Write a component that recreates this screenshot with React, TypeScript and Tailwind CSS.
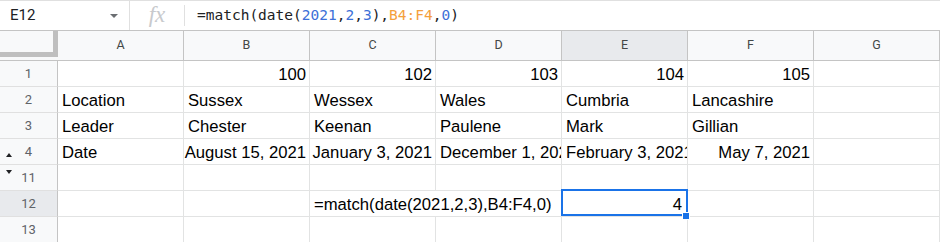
import React from 'react';

const COLS = ['A', 'B', 'C', 'D', 'E', 'F', 'G'];

type Cell = { text?: string; align?: 'left' | 'right'; span?: number; selected?: boolean };

const rows: { label: string; cells: Cell[]; active?: boolean; mark?: 'up' | 'down' }[] = [
  {
    label: '1',
    cells: [{}, { text: '100', align: 'right' }, { text: '102', align: 'right' }, { text: '103', align: 'right' }, { text: '104', align: 'right' }, { text: '105', align: 'right' }, {}],
  },
  {
    label: '2',
    cells: [{ text: 'Location' }, { text: 'Sussex' }, { text: 'Wessex' }, { text: 'Wales' }, { text: 'Cumbria' }, { text: 'Lancashire' }, {}],
  },
  {
    label: '3',
    cells: [{ text: 'Leader' }, { text: 'Chester' }, { text: 'Keenan' }, { text: 'Paulene' }, { text: 'Mark' }, { text: 'Gillian' }, {}],
  },
  {
    label: '4',
    mark: 'up',
    cells: [
      { text: 'Date' },
      { text: 'August 15, 2021', align: 'right' },
      { text: 'January 3, 2021', align: 'right' },
      { text: 'December 1, 2021' },
      { text: 'February 3, 2021' },
      { text: 'May 7, 2021', align: 'right' },
      {},
    ],
  },
  { label: '11', mark: 'down', cells: [{}, {}, {}, {}, {}, {}, {}] },
  {
    label: '12',
    active: true,
    cells: [{}, {}, { text: '=match(date(2021,2,3),B4:F4,0)', span: 2 }, { text: '4', align: 'right', selected: true }, {}, {}],
  },
  { label: '13', cells: [{}, {}, {}, {}, {}, {}, {}] },
];

function FormulaBar() {
  const num = 'text-[#3c6fd8]';
  const ref = 'text-[#f4a03c]';
  return (
    <div className="flex h-[31px] border-t border-b border-t-[#e0e0e0] border-b-[#c4c4c4] bg-white">
      <div className="flex w-[130px] items-center border-r border-[#e0e0e0] pl-[10px] pr-[11px]">
        <span className="flex-1 text-[15px] text-[#202124] font-['Roboto',sans-serif]">E12</span>
        <span className="h-0 w-0 border-x-[4px] border-t-[4px] border-x-transparent border-t-[#6b6e72]" />
      </div>
      <div className="flex w-[54px] items-center justify-center">
        <span className="text-[23px] italic leading-none text-[#c8cacd] font-['Liberation_Serif',serif] pb-[2px]">fx</span>
      </div>
      <div className="my-[4px] w-px bg-[#e0e0e0]" />
      <div className="flex items-center pl-[12px] text-[14.5px] text-[#202124] font-['DejaVu_Sans_Mono',monospace]">
        =match(date(<span className={num}>2021</span>,<span className={num}>2</span>,<span className={num}>3</span>),
        <span className={ref}>B4:F4</span>,<span className={num}>0</span>)
      </div>
    </div>
  );
}

export default function App() {
  return (
    <div className="h-[242px] w-[940px] overflow-hidden bg-white">
      <FormulaBar />
      <div className="grid grid-cols-[58px_repeat(7,126px)] grid-rows-[30px] auto-rows-[26px]">
        <div className="border-b border-[#c4c4c4] bg-[#f8f9fa]">
          <div className="h-[26px] border-r-[5px] border-b-[5px] border-[#bfbfbf]" />
        </div>
        {COLS.map((c) => (
          <div
            key={c}
            className={`flex items-center justify-center border-r border-b border-[#c4c4c4] text-[12.5px] text-[#444746] font-['Roboto',sans-serif] ${
              c === 'E' ? 'bg-[#e8eaed]' : 'bg-[#f8f9fa]'
            }`}
          >
            {c}
          </div>
        ))}
        {rows.map((r) => (
          <React.Fragment key={r.label}>
            <div
              className={`relative flex items-center justify-center border-r border-b border-r-[#c4c4c4] border-b-[#e0e0e0] text-[13px] text-[#5f6368] font-['Roboto',sans-serif] ${
                r.active ? 'bg-[#e8eaed]' : 'bg-[#f8f9fa]'
              }`}
            >
              {r.mark === 'up' && (
                <span className="absolute left-[6px] top-[14px] h-0 w-0 border-x-[3.5px] border-b-[4px] border-x-transparent border-b-[#202124]" />
              )}
              {r.mark === 'down' && (
                <span className="absolute left-[6px] top-[5px] h-0 w-0 border-x-[3.5px] border-t-[4px] border-x-transparent border-t-[#202124]" />
              )}
              {r.label}
            </div>
            {r.cells.map((cell, i) => (
              <div
                key={i}
                className={`relative whitespace-nowrap border-r border-b border-[#e2e3e3] pt-[2px] text-[16.67px] leading-[23px] text-black font-['Liberation_Sans',Arial,sans-serif] ${
                  cell.span === 2 ? 'col-span-2' : 'overflow-hidden'
                } ${cell.align === 'right' ? 'text-right pl-0' : 'text-left pl-[4px]'} ${cell.selected ? 'overflow-visible pr-[5px]' : 'pr-[3px]'}`}
              >
                {cell.text}
                {cell.selected && (
                  <>
                    <div className="absolute -left-[1px] -right-[1px] -top-[2px] bottom-0 z-10 border-2 border-[#1a73e8]" />
                    <div className="absolute -right-[3px] -bottom-[4px] z-20 h-[8px] w-[8px] border border-white bg-[#1a73e8]" />
                  </>
                )}
              </div>
            ))}
          </React.Fragment>
        ))}
      </div>
    </div>
  );
}
